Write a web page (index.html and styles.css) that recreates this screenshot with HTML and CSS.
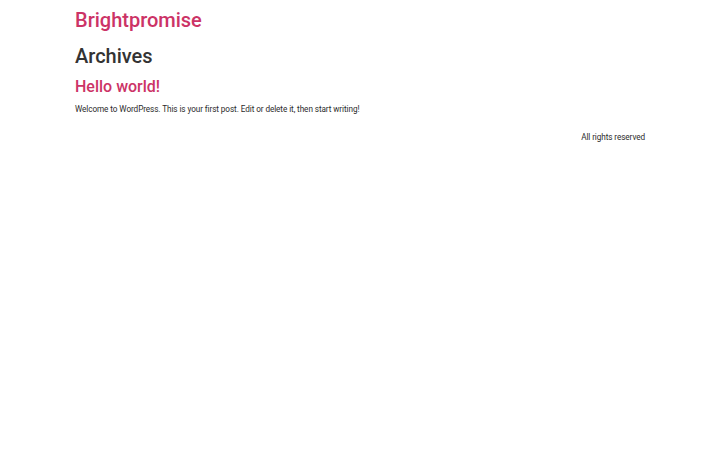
FILE: index.html
```html
<!DOCTYPE html>
<html lang="en">
<head>
<meta charset="utf-8">
<title>Archives – Brightpromise</title>
<link rel="stylesheet" href="styles.css">
</head>
<body>
<header class="site-header">
  <a class="site-title" href="#">Brightpromise</a>
</header>
<main class="site-main">
  <h1 class="page-title">Archives</h1>
  <article class="post">
    <h2 class="entry-title"><a href="#">Hello world!</a></h2>
    <p class="excerpt">Welcome to WordPress. This is your first post. Edit or delete it, then start writing!</p>
  </article>
</main>
<footer class="site-footer">
  <p class="copyright">All rights reserved</p>
</footer>
</body>
</html>
```

FILE: styles.css
```css
html, body {
  margin: 0;
  padding: 0;
  background: #fff;
}
body {
  font-family: Roboto, "Liberation Sans", sans-serif;
  color: #333;
  font-size: 8px;
  line-height: 1.5;
}
a {
  color: #c36;
  text-decoration: none;
}
.site-header,
.site-main,
.site-footer {
  width: 570px;
  margin: 0 auto;
}
.site-header {
  padding-top: 5px;
}
.site-title {
  display: block;
  font-size: 20px;
  font-weight: 500;
  line-height: 30px;
}
.page-title {
  margin: 8.5px 0 0;
  font-size: 20px;
  font-weight: 500;
  line-height: 24px;
  color: #333;
}
.entry-title {
  margin: 9px 0 0;
  font-size: 16px;
  font-weight: 500;
  line-height: 19.2px;
}
.excerpt {
  margin: 7.5px 0 0;
  font-size: 8.2px;
  line-height: 12px;
  letter-spacing: -0.085px;
  color: #2b2b2b;
}
.site-footer {
  display: flex;
  justify-content: flex-end;
}
.copyright {
  margin: 15.5px 0 0;
  font-size: 8.2px;
  line-height: 12px;
  letter-spacing: -0.085px;
  color: #2b2b2b;
}
```
